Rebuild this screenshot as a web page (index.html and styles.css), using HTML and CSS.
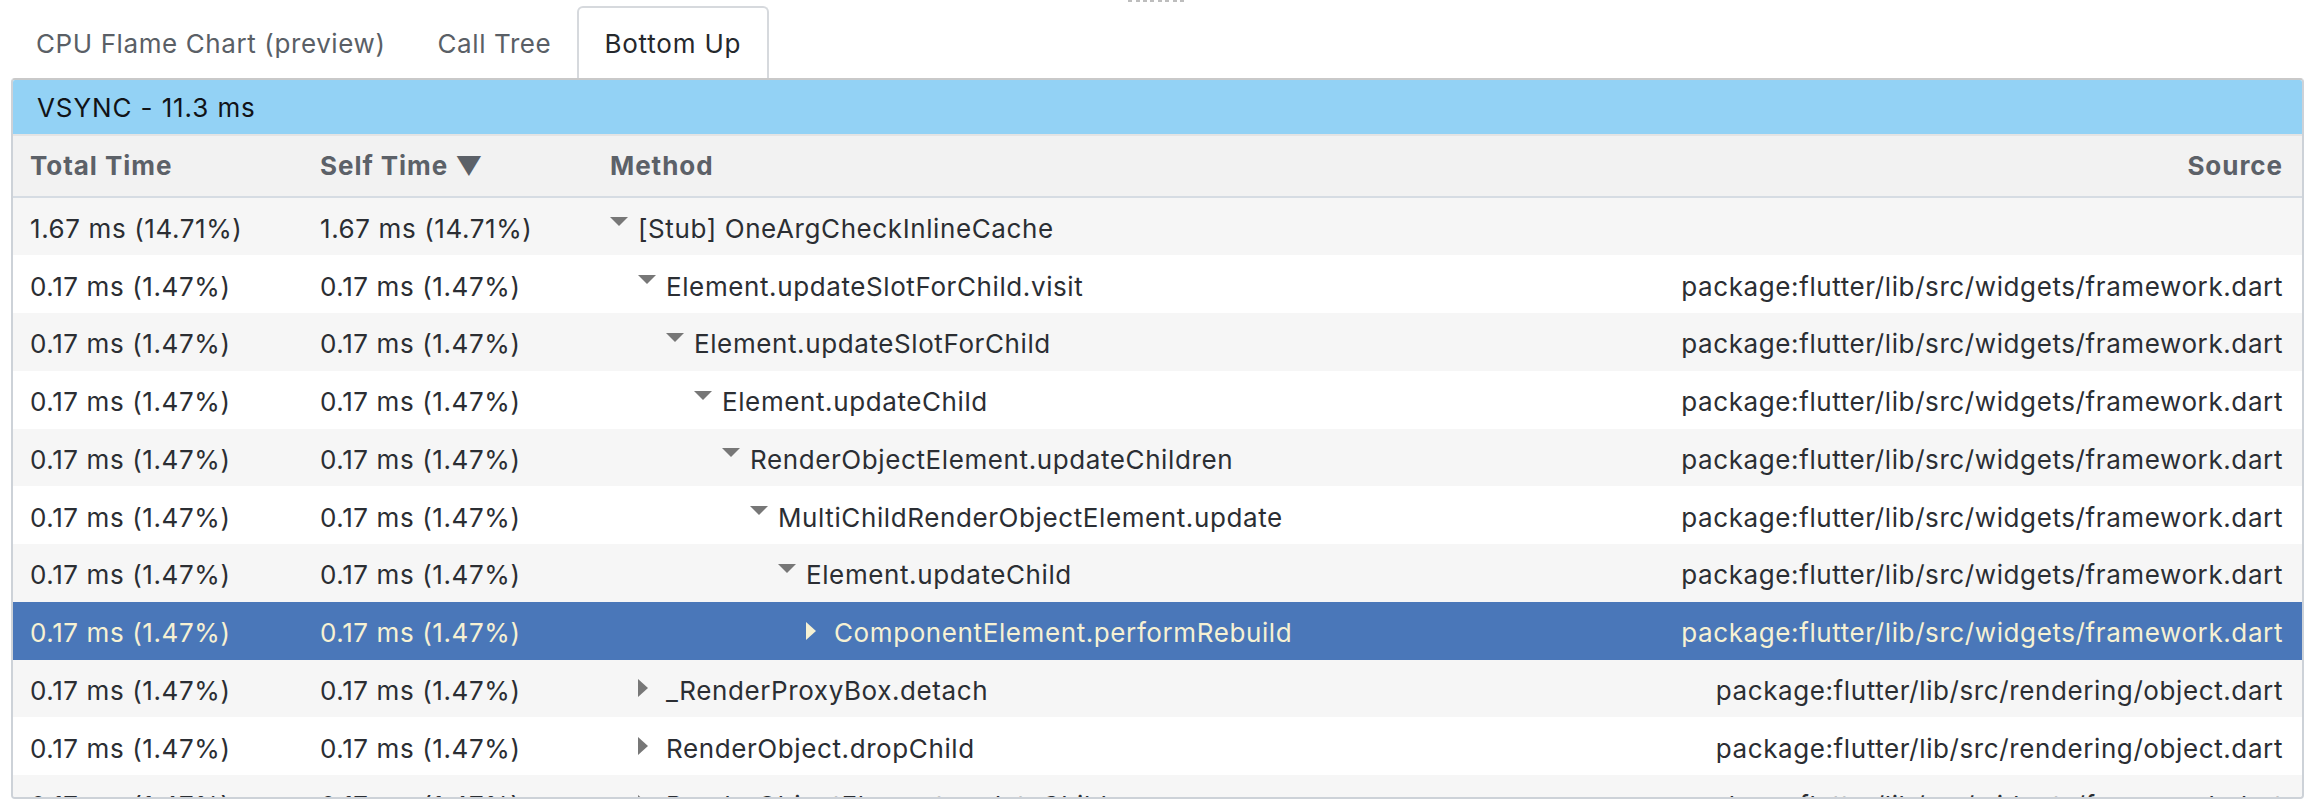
FILE: index.html
```html
<!DOCTYPE html>
<html>
<head>
<meta charset="utf-8">
<link rel="stylesheet" href="styles.css">
</head>
<body>
<div class="handle-row"><div class="handle"></div></div>
<div class="tabs">
  <div class="tab">CPU Flame Chart (preview)</div>
  <div class="tab">Call Tree</div>
  <div class="tab active">Bottom Up</div>
</div>
<div class="panel">
  <div class="title">VSYNC - 11.3 ms</div>
  <div class="table">
    <div class="row head">
      <div class="cell">Total Time</div>
      <div class="cell">Self Time ▼</div>
      <div class="cell">Method</div>
      <div class="cell src">Source</div>
    </div>
    <div class="row odd">
      <div class="cell">1.67 ms (14.71%)</div>
      <div class="cell">1.67 ms (14.71%)</div>
      <div class="cell method lv0"><span class="tw"><svg class="down" viewBox="0 0 18 9"><path d="M0 0H18L9 9Z"/></svg></span>[Stub] OneArgCheckInlineCache</div>
      <div class="cell src"></div>
    </div>
    <div class="row">
      <div class="cell">0.17 ms (1.47%)</div>
      <div class="cell">0.17 ms (1.47%)</div>
      <div class="cell method lv1"><span class="tw"><svg class="down" viewBox="0 0 18 9"><path d="M0 0H18L9 9Z"/></svg></span>Element.updateSlotForChild.visit</div>
      <div class="cell src">package:flutter/lib/src/widgets/framework.dart</div>
    </div>
    <div class="row odd">
      <div class="cell">0.17 ms (1.47%)</div>
      <div class="cell">0.17 ms (1.47%)</div>
      <div class="cell method lv2"><span class="tw"><svg class="down" viewBox="0 0 18 9"><path d="M0 0H18L9 9Z"/></svg></span>Element.updateSlotForChild</div>
      <div class="cell src">package:flutter/lib/src/widgets/framework.dart</div>
    </div>
    <div class="row">
      <div class="cell">0.17 ms (1.47%)</div>
      <div class="cell">0.17 ms (1.47%)</div>
      <div class="cell method lv3"><span class="tw"><svg class="down" viewBox="0 0 18 9"><path d="M0 0H18L9 9Z"/></svg></span>Element.updateChild</div>
      <div class="cell src">package:flutter/lib/src/widgets/framework.dart</div>
    </div>
    <div class="row odd">
      <div class="cell">0.17 ms (1.47%)</div>
      <div class="cell">0.17 ms (1.47%)</div>
      <div class="cell method lv4"><span class="tw"><svg class="down" viewBox="0 0 18 9"><path d="M0 0H18L9 9Z"/></svg></span>RenderObjectElement.updateChildren</div>
      <div class="cell src">package:flutter/lib/src/widgets/framework.dart</div>
    </div>
    <div class="row">
      <div class="cell">0.17 ms (1.47%)</div>
      <div class="cell">0.17 ms (1.47%)</div>
      <div class="cell method lv5"><span class="tw"><svg class="down" viewBox="0 0 18 9"><path d="M0 0H18L9 9Z"/></svg></span>MultiChildRenderObjectElement.update</div>
      <div class="cell src">package:flutter/lib/src/widgets/framework.dart</div>
    </div>
    <div class="row odd">
      <div class="cell">0.17 ms (1.47%)</div>
      <div class="cell">0.17 ms (1.47%)</div>
      <div class="cell method lv6"><span class="tw"><svg class="down" viewBox="0 0 18 9"><path d="M0 0H18L9 9Z"/></svg></span>Element.updateChild</div>
      <div class="cell src">package:flutter/lib/src/widgets/framework.dart</div>
    </div>
    <div class="row selected">
      <div class="cell">0.17 ms (1.47%)</div>
      <div class="cell">0.17 ms (1.47%)</div>
      <div class="cell method lv7"><span class="tw"><svg class="right" viewBox="0 0 10 18"><path d="M0 0L10 9L0 18Z"/></svg></span>ComponentElement.performRebuild</div>
      <div class="cell src">package:flutter/lib/src/widgets/framework.dart</div>
    </div>
    <div class="row odd">
      <div class="cell">0.17 ms (1.47%)</div>
      <div class="cell">0.17 ms (1.47%)</div>
      <div class="cell method lv1"><span class="tw"><svg class="right" viewBox="0 0 10 18"><path d="M0 0L10 9L0 18Z"/></svg></span>_RenderProxyBox.detach</div>
      <div class="cell src">package:flutter/lib/src/rendering/object.dart</div>
    </div>
    <div class="row">
      <div class="cell">0.17 ms (1.47%)</div>
      <div class="cell">0.17 ms (1.47%)</div>
      <div class="cell method lv1"><span class="tw"><svg class="right" viewBox="0 0 10 18"><path d="M0 0L10 9L0 18Z"/></svg></span>RenderObject.dropChild</div>
      <div class="cell src">package:flutter/lib/src/rendering/object.dart</div>
    </div>
    <div class="row odd">
      <div class="cell">0.17 ms (1.47%)</div>
      <div class="cell">0.17 ms (1.47%)</div>
      <div class="cell method lv1"><span class="tw"><svg class="right" viewBox="0 0 10 18"><path d="M0 0L10 9L0 18Z"/></svg></span>RenderObjectElement.updateChildren</div>
      <div class="cell src">package:flutter/lib/src/widgets/framework.dart</div>
    </div>
  </div>
</div>
</body>
</html>
```

FILE: styles.css
```css
html, body {
  margin: 0;
  padding: 0;
  background: #ffffff;
}
body {
  font-family: Inter, "Noto Sans", Roboto, sans-serif;
  font-size: 26px;
  letter-spacing: 0.6px;
  color: #2b2e33;
  width: 2310px;
  height: 808px;
  overflow: hidden;
}
.handle-row {
  height: 2px;
  display: flex;
  justify-content: center;
  padding-left: 4px;
}
.handle {
  width: 59px;
  height: 2px;
  background: repeating-linear-gradient(90deg, #bdbdbd 0 4px, transparent 4px 7.5px);
}
.tabs {
  display: flex;
  align-items: flex-end;
  padding: 4px 0 0 10px;
  height: 72px;
}
.tab {
  height: 72px;
  box-sizing: border-box;
  padding: 0 24px;
  border: 2px solid transparent;
  border-bottom: none;
  display: flex;
  align-items: center;
  color: #5a5f66;
  white-space: nowrap;
}
.tab.active {
  padding: 0 26px 0 25px;
  border-color: #d6d9dd;
  border-radius: 6px 6px 0 0;
  color: #25282c;
  background: #ffffff;
  letter-spacing: 0.8px;
}
.panel {
  margin: 0 6px 0 11px;
  height: 721px;
  box-sizing: border-box;
  border: 2px solid #cdd2d8;
  border-top-color: #c9c9c9;
  border-radius: 4px;
  overflow: hidden;
  display: flex;
  flex-direction: column;
}
.title {
  flex: 0 0 54px;
  background: #93d2f5;
  display: flex;
  align-items: center;
  padding-left: 24px;
  color: #111317;
  letter-spacing: 0.9px;
}
.table {
  flex: 1 1 0;
  min-height: 0;
  overflow: hidden;
}
.row {
  display: grid;
  grid-template-columns: 290px 290px 1fr auto;
  height: 57.75px;
  box-sizing: border-box;
  padding-top: 4px;
  align-items: center;
  background: #ffffff;
  white-space: nowrap;
}
.row.odd {
  background: #f6f6f6;
}
.row.head {
  height: 63.5px;
  padding-top: 0;
  background: #f2f2f2;
  border-top: 2px solid #e4e4e4;
  border-bottom: 2px solid #d6dce3;
  font-weight: 700;
  color: #5c6168;
  letter-spacing: 0.95px;
}
.row.selected {
  background: #4a77b9;
  color: #f6f1d3;
}
.cell {
  padding-left: 17px;
  display: flex;
  align-items: center;
}
.cell.src {
  padding: 0 19px 0 0;
  justify-content: flex-end;
}
.tw {
  width: 28px;
  flex: 0 0 28px;
  display: flex;
  align-items: center;
}
.tw svg {
  display: block;
  fill: #777777;
}
.selected .tw svg {
  fill: #f6f1d3;
}
.down {
  width: 18px;
  height: 9px;
  margin-top: -13px;
}
.right {
  width: 10px;
  height: 18px;
  margin-top: -4px;
}
.lv0 { padding-left: 17px; }
.lv1 { padding-left: 45px; }
.lv2 { padding-left: 73px; }
.lv3 { padding-left: 101px; }
.lv4 { padding-left: 129px; }
.lv5 { padding-left: 157px; }
.lv6 { padding-left: 185px; }
.lv7 { padding-left: 213px; }
```
